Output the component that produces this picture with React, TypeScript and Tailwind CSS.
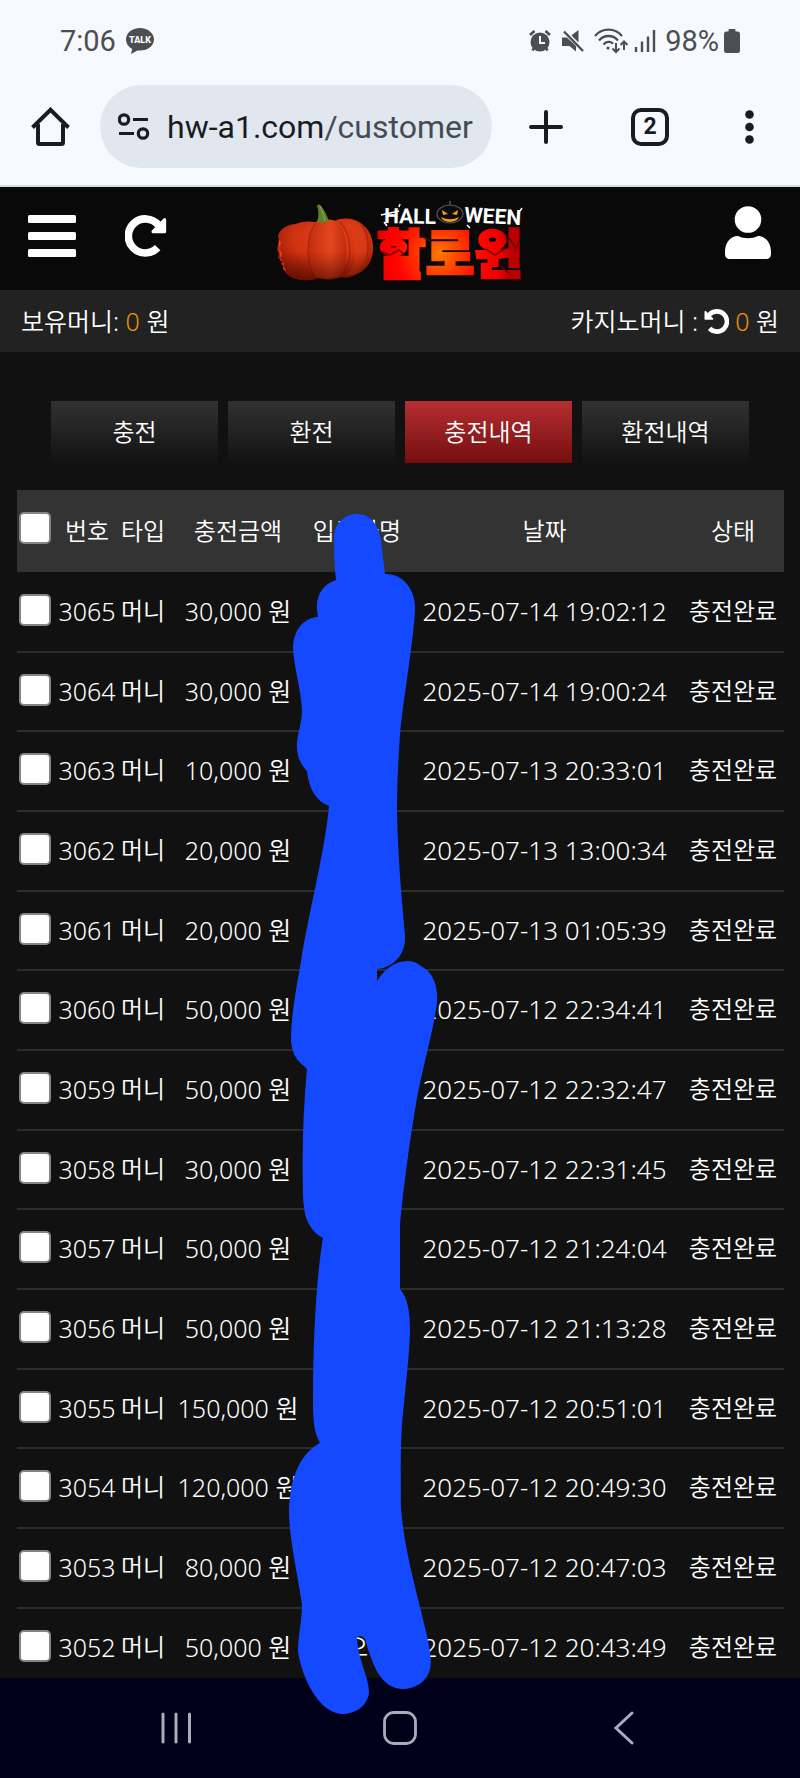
import React from "react";

type Deposit = { id: number; amount: string; date: string; name?: string };

const deposits: Deposit[] = [
  { id: 3065, amount: "30,000", date: "2025-07-14 19:02:12" },
  { id: 3064, amount: "30,000", date: "2025-07-14 19:00:24" },
  { id: 3063, amount: "10,000", date: "2025-07-13 20:33:01" },
  { id: 3062, amount: "20,000", date: "2025-07-13 13:00:34" },
  { id: 3061, amount: "20,000", date: "2025-07-13 01:05:39" },
  { id: 3060, amount: "50,000", date: "2025-07-12 22:34:41" },
  { id: 3059, amount: "50,000", date: "2025-07-12 22:32:47" },
  { id: 3058, amount: "30,000", date: "2025-07-12 22:31:45" },
  { id: 3057, amount: "50,000", date: "2025-07-12 21:24:04" },
  { id: 3056, amount: "50,000", date: "2025-07-12 21:13:28" },
  { id: 3055, amount: "150,000", date: "2025-07-12 20:51:01" },
  { id: 3054, amount: "120,000", date: "2025-07-12 20:49:30" },
  { id: 3053, amount: "80,000", date: "2025-07-12 20:47:03" },
  { id: 3052, amount: "50,000", date: "2025-07-12 20:43:49", name: "으" },
];

const tabs = ["충전", "환전", "충전내역", "환전내역"];

function StatusBar() {
  return (
    <div className="flex h-20 items-center pl-[60px] pr-[60px] pt-[2px] text-[29px] leading-8 text-[#4d4e50]">
      <span>7:06</span>
      <svg className="ml-[10px]" width="28" height="26" viewBox="0 0 28 26" aria-label="TALK">
        <path d="M14 0C6 0 0 5 0 11.500c0 4 2.500 7.400 6.200 9.400L5 26l6.500-3.600c.8.1 1.600.1 2.500.1 8 0 14-4.800 14-11S22 0 14 0Z" fill="#4d4e50" />
        <text x="14" y="15" textAnchor="middle" fontSize="9" fontWeight="900" fill="#f6f9fe">TALK</text>
      </svg>
      <div className="ml-auto flex items-center">
        <svg width="22" height="22" viewBox="0 0 22 22" fill="none" stroke="#4d4e50">
          <circle cx="11" cy="12" r="9.500" fill="#4d4e50" stroke="none" />
          <path d="M1 5 5.500 1M21 5 16.500 1M3.500 20.500 5 18M18.500 20.500 17 18" strokeWidth="2.600" />
          <path d="M11 6v7h5" stroke="#f6f9fe" strokeWidth="2" />
        </svg>
        <svg className="ml-[11px]" width="22" height="22" viewBox="0 0 22 22">
          <path d="M0 7.500h5L14 16v5.500L7.500 16H0ZM8.500 6 16.500 0v12.500Z" fill="#4d4e50" />
          <path d="M3.500 .5 22 20" stroke="#f6f9fe" strokeWidth="2" />
          <path d="M2 1.500 21 21" stroke="#4d4e50" strokeWidth="2.400" />
        </svg>
        <svg className="ml-[10px]" width="34" height="26" viewBox="0 0 34 26" fill="none" stroke="#4d4e50" strokeWidth="2.300">
          <path d="M1 8C8-.5 21-.5 28 8M5 12.500c5-6 14-6 19 0M9.500 16.500c3-3.300 7-3.300 9.500-.8" />
          <circle cx="14" cy="20" r="1.600" fill="#4d4e50" stroke="none" />
          <path d="M22 15v8.500M18.500 20.500 22 24l3.500-3.500M30 22v-8M26.500 17l3.500-3.500 3.500 3.500" strokeWidth="2" />
        </svg>
        <svg className="ml-[6px]" width="22" height="22" viewBox="0 0 22 22" stroke="#4d4e50" strokeWidth="2.400">
          <path d="M2 17v5M8 11.500V22M14 6.500V22M20 0v22" />
        </svg>
        <span className="ml-[9px]">98%</span>
        <svg className="ml-[5px]" width="16" height="24" viewBox="0 0 16 24" fill="#4d4e50">
          <rect x="4.500" width="7" height="5" rx="1" />
          <rect y="2.500" width="16" height="21.500" rx="2.500" />
        </svg>
      </div>
    </div>
  );
}

function AddressBar() {
  return (
    <div className="flex items-center pb-[17px] pl-[31px] pr-[46px] pt-[5px] text-[#191c20]">
      <button aria-label="홈">
        <svg className="block" width="39" height="39" viewBox="0 0 39 39" fill="none" stroke="currentColor" strokeWidth="4">
          <path d="M1.500 20.500 19.500 2.800l18 17.700" />
          <path d="M7 17v18.500a1.500 1.500 0 0 0 1.500 1.500h22a1.500 1.500 0 0 0 1.500-1.500V17" />
        </svg>
      </button>
      <div className="ml-[30px] flex h-[83px] min-w-0 flex-1 items-center rounded-full bg-[#e1e7ef] pl-[18px] pr-[16px]">
        <svg className="shrink-0" width="32" height="28" viewBox="0 0 32 28" fill="none" stroke="currentColor" strokeWidth="3.200">
          <circle cx="6" cy="6.500" r="4.700" />
          <path d="M15 6.500h15M1 20.500h15" />
          <circle cx="25" cy="20.500" r="4.700" />
        </svg>
        <div className="ml-[17px] overflow-hidden whitespace-nowrap text-[32px] leading-10">
          hw-a1.com<span className="text-[#454b54]">/customer</span>
        </div>
      </div>
      <button className="ml-[37px]" aria-label="새 탭">
        <svg className="block" width="34" height="34" viewBox="0 0 34 34" stroke="currentColor" strokeWidth="4" strokeLinecap="round">
          <path d="M17 2v30M2 17h30" />
        </svg>
      </button>
      <button className="ml-[68px] flex size-[38px] items-center justify-center rounded-[10px] border-4 border-[#191c20] text-[23px] font-bold leading-6">
        2
      </button>
      <button className="ml-[76px]" aria-label="메뉴">
        <svg className="block" width="9" height="34" viewBox="0 0 9 34" fill="currentColor">
          <circle cx="4.500" cy="4.500" r="4.300" />
          <circle cx="4.500" cy="17" r="4.300" />
          <circle cx="4.500" cy="29.500" r="4.300" />
        </svg>
      </button>
    </div>
  );
}

function RotateIcon({ className }: { className: string }) {
  return (
    <svg className={className} viewBox="0 0 126 126" fill="none" stroke="#fff">
      <path d="M98 98A51 51 0 1 1 100 30" strokeWidth="23" />
      <path d="M119 14v36H84Z" fill="#fff" strokeWidth="9" strokeLinejoin="round" />
    </svg>
  );
}

function Logo() {
  return (
    <svg className="mt-1 block overflow-visible" width="250" height="86" viewBox="275 197 250 86" role="img" aria-label="HALLOWEEN 할로윈">
      <defs>
        <radialGradient id="skin" cx="0.55" cy="0.32" r="0.7">
          <stop offset="0" stopColor="#e2431a" />
          <stop offset="0.55" stopColor="#cf3210" />
          <stop offset="1" stopColor="#8a1806" />
        </radialGradient>
        <linearGradient id="rib" x1="0" x2="1" y1="0" y2="0">
          <stop offset="0" stopColor="#b72a0c" />
          <stop offset="0.6" stopColor="#e64a20" />
          <stop offset="1" stopColor="#b0260b" />
        </linearGradient>
        <linearGradient id="shade" x1="0" x2="0" y1="0" y2="1">
          <stop offset="0.55" stopColor="#5a0e02" stopOpacity="0" />
          <stop offset="1" stopColor="#5a0e02" stopOpacity="0.65" />
        </linearGradient>
        <radialGradient id="fire" gradientUnits="userSpaceOnUse" cx="440" cy="253" r="72">
          <stop offset="0" stopColor="#ff7a00" />
          <stop offset="0.35" stopColor="#ff3000" />
          <stop offset="0.6" stopColor="#ff0500" />
          <stop offset="0.85" stopColor="#f00000" />
          <stop offset="1" stopColor="#b80000" />
        </radialGradient>
      </defs>
      <path d="M295 223c8-3 15-3 20-2 8-3 15-3 20-1 8-4 19-3 27 3 8 6 12 16 11 27-1 12-8 20-18 24-4 2-9 3-14 2-7 3-16 3-22 1-9 3-20 3-28-1-5-3-7-6-7-9l-3-4 1-3-4-3 1-4-2-5 2-8-1-5c2-7 8-11 17-12Z" fill="url(#skin)" />
      <path d="M316 222c-10 11-11 42 0 54 8 2 18 1 24-1 9-14 9-42-3-55-7-2-14-1-21 2Z" fill="url(#rib)" opacity="0.700" />
      <path d="M343 221c14 13 16 40 3 54 9-1 15-4 19-12 5-13 2-33-9-42-4-2-9-2-13 0Z" fill="#df421a" opacity="0.500" />
      <path d="M316 222c-10 11-11 42 0 54M340 221c13 14 13 40 1 54M362 224c9 13 8 33-3 45" fill="none" stroke="#8c1906" strokeWidth="1.500" opacity="0.450" />
      <path d="M295 223c8-3 15-3 20-2 8-3 15-3 20-1 8-4 19-3 27 3 8 6 12 16 11 27-1 12-8 20-18 24-4 2-9 3-14 2-7 3-16 3-22 1-9 3-20 3-28-1-5-3-7-6-7-9l-3-4 1-3-4-3 1-4-2-5 2-8-1-5c2-7 8-11 17-12Z" fill="url(#shade)" />
      <path d="M279 238l2 4-2 5 3 6-2 6 4 4-1 5 3 2c-5-9-8-20-7-32Z" fill="#ff3d15" />
      <path d="M317 221c2-6 2-11 0-16 1-2 3-2 4 0 4 5 6 10 8 15-4 2-8 2-12 1Z" fill="#627f2a" />
      <path d="M320 205c3 6 4 10 5 15" fill="none" stroke="#86a044" strokeWidth="1.200" />

      <g fill="#fff" fontFamily="Roboto, sans-serif" fontSize="21" fontWeight="700">
        <text x="384" y="222" transform="rotate(1 384 222)">HALL</text>
        <text x="464" y="221" transform="rotate(3 464 221)">WEEN</text>
      </g>
      <path d="M381 214l18-4M384 221l3 4M399 206l1-3M520 210l2-3M467 224l3 3" stroke="#fff" strokeWidth="1.500" />
      <ellipse cx="450" cy="213" rx="13" ry="9" fill="#0b0b0b" stroke="#555" strokeWidth="1.200" />
      <path d="M450 204v-4" stroke="#555" strokeWidth="1.500" />
      <path d="M442 209l6 4-5 1ZM458 209l-6 4 5 1ZM441 216c6 3 12 3 18 0-2 6-15 7-18 0Z" fill="#f5a021" />

      <text x="377" y="273" fontFamily="'Noto Sans CJK KR', sans-serif" fontSize="53" fontWeight="900" fill="url(#fire)" stroke="url(#fire)" strokeWidth="2.500">할로윈</text>
      <path d="M382 251l8 3 9-5 6 5M424 237l7 3M437 264l7-4M486 248l9 6 11-7M508 236l8 11 4-9M500 265l9 7" fill="none" stroke="#5b0500" strokeWidth="1.600" opacity="0.800" />
    </svg>
  );
}

function SiteHeader() {
  return (
    <header className="grid h-[103px] shrink-0 grid-cols-[1fr_auto_1fr] items-center bg-[#090909] pl-7 pr-[29px]">
      <div className="flex items-center gap-[49px] pb-[6px]">
        <button aria-label="전체 메뉴">
          <svg className="block" width="48" height="42" viewBox="0 0 48 42" fill="#fff">
            <rect width="48" height="8" rx="1.500" />
            <rect y="17" width="48" height="8" rx="1.500" />
            <rect y="34" width="48" height="8" rx="1.500" />
          </svg>
        </button>
        <button aria-label="새로고침"><RotateIcon className="block size-[42px]" /></button>
      </div>
      <Logo />
      <button className="justify-self-end pb-3" aria-label="내 정보">
        <svg className="block" width="46" height="53" viewBox="0 0 46 53" fill="#fff">
          <circle cx="23" cy="13.500" r="13.300" />
          <path d="M13 30c6 3 14 3 20 0 8 0 13 7 13 16v2c0 3-2 5-5 5H5c-3 0-5-2-5-5v-2c0-9 5-16 13-16Z" />
        </svg>
      </button>
    </header>
  );
}

const boxClass =
  "block size-8 appearance-none rounded-[5px] border-2 border-[#858585] bg-white";

function DepositTable() {
  return (
    <table className="w-full table-fixed border-collapse text-center text-[24px] leading-8 whitespace-nowrap">
      <colgroup>
        <col className="w-9" />
        <col className="w-[68px]" />
        <col className="w-[44px]" />
        <col className="w-[146px]" />
        <col className="w-[92px]" />
        <col />
        <col className="w-[102px]" />
      </colgroup>
      <thead>
        <tr className="h-[82px] bg-[#333]">
          <th className="pb-[6px] pl-[2px]">
            <input type="checkbox" aria-label="전체 선택" className={boxClass} />
          </th>
          <th className="font-[350]">번호</th>
          <th className="font-[350]">타입</th>
          <th className="font-[350]">충전금액</th>
          <th className="font-[350]">입금자명</th>
          <th className="pl-1 font-[350]">날짜</th>
          <th className="font-[350]">상태</th>
        </tr>
      </thead>
      <tbody>
        {deposits.map((d) => (
          <tr key={d.id} className="h-20 border-b-2 border-[#2c2c2c] nth-[3n+2]:h-[79px]">
            <td className="pb-1 pl-[2px]">
              <input type="checkbox" aria-label={`${d.id} 선택`} className={boxClass} />
            </td>
            <td className="pb-[2px] text-[25px]">{d.id}</td>
            <td className="pb-[2px]">머니</td>
            <td className="pb-[2px] text-[25px]">{d.amount} 원</td>
            <td className="pb-[2px]">{d.name}</td>
            <td className="pb-[2px] pl-1 text-[26px]">{d.date}</td>
            <td className="pb-[2px]">충전완료</td>
          </tr>
        ))}
      </tbody>
    </table>
  );
}

function Scribble() {
  return (
    <svg className="pointer-events-none absolute left-[280px] top-[501px]" width="170" height="1220" viewBox="280 500 170 1220" aria-hidden="true">
      <path
        fill="#1549ff"
        d="M357 513C370 513 379 524 381 540L385 573C402 572 415 588 415 606C415 630 403 700 400 733C398 760 397 790 397 811C398 860 402 900 405 935C406 955 391 967 377 968V980C384 969 394 960 408 960C416 960 419 964 424 967C434 973 438 987 437 1000C436 1020 421 1072 416 1103C408 1150 402 1200 400 1225V1288C408 1297 410 1312 410 1330C410 1350 403 1410 402 1425C400 1450 401 1490 401 1507C404 1550 418 1595 427 1635C430 1650 432 1660 430 1668C427 1681 415 1688 402 1688C380 1687 372 1662 365 1638Q361 1633 357 1636C358 1660 369 1675 369 1692C367 1705 356 1713 341 1713C319 1711 302 1678 298 1650C298 1635 302 1620 302 1603C296 1565 289 1535 289 1510C290 1475 301 1452 320 1442C313 1430 313 1415 313 1395C313 1335 317 1270 323 1237C307 1228 304 1214 303 1195C302 1150 303 1110 307 1068C300 1061 293 1058 291 1040C291 1010 298 980 301 960C309 910 325 850 329 805C316 800 309 788 307 770C300 763 296 753 297 742C298 730 302 722 302 708C301 690 294 665 293 648C293 631 302 617 318 616C314 597 321 584 336 579C334 560 334 550 334 537C334 523 344 513 357 513Z"
      />
    </svg>
  );
}

function NavigationBar() {
  return (
    <nav className="flex h-[100px] shrink-0 items-center justify-between bg-[#00001b] px-40">
      <button aria-label="최근 앱">
        <svg className="block" width="34" height="34" viewBox="0 0 34 34" stroke="#acabba" strokeWidth="3" strokeLinecap="round">
          <path d="M3 3v28M16 3v28M29.500 3v28" />
        </svg>
      </button>
      <button aria-label="홈 화면">
        <svg className="block" width="34" height="34" viewBox="0 0 34 34" fill="none" stroke="#acabba" strokeWidth="2.800">
          <rect x="1.500" y="1.500" width="31" height="31" rx="9" />
        </svg>
      </button>
      <button aria-label="뒤로">
        <svg className="block" width="34" height="34" viewBox="0 0 34 34" fill="none" stroke="#acabba" strokeWidth="3" strokeLinecap="round">
          <path d="M26 2 10 17l16 15" />
        </svg>
      </button>
    </nav>
  );
}

export default function App() {
  return (
    <div className="relative flex h-screen flex-col overflow-hidden bg-[#111] font-['Noto_Sans','Noto_Sans_CJK_KR',sans-serif] font-[350] text-white">
      <div className="shrink-0 border-b-2 border-[#d8dde1] bg-[#f6f9fe] font-[Roboto,sans-serif] font-normal">
        <StatusBar />
        <AddressBar />
      </div>
      <SiteHeader />
      <div className="flex h-[62px] shrink-0 items-center justify-between bg-[#222] px-[21px] text-[25px] leading-8">
        <p>보유머니: <span className="text-[#ea920d]">0</span> 원</p>
        <div className="flex items-center gap-[6px]">
          <span>카지노머니 :</span>
          <button aria-label="카지노머니 새로고침"><RotateIcon className="block size-[25px] -scale-x-100" /></button>
          <p><span className="text-[#ea920d]">0</span> 원</p>
        </div>
      </div>
      <main className="min-h-0 flex-1 overflow-hidden">
        <div className="mt-[49px] grid grid-cols-4 gap-[10px] px-[51px]">
          {tabs.map((tab) => (
            <button
              key={tab}
              className={
                tab === "충전내역"
                  ? "h-[62px] bg-linear-to-b from-[#b62f31] to-[#760d0f] text-[24px] leading-8"
                  : "h-[62px] bg-linear-to-b from-[#323232] to-[#121212] text-[24px] leading-8"
              }
            >
              {tab}
            </button>
          ))}
        </div>
        <div className="mt-[27px] pl-[17px] pr-4">
          <DepositTable />
        </div>
      </main>
      <NavigationBar />
      <Scribble />
    </div>
  );
}
